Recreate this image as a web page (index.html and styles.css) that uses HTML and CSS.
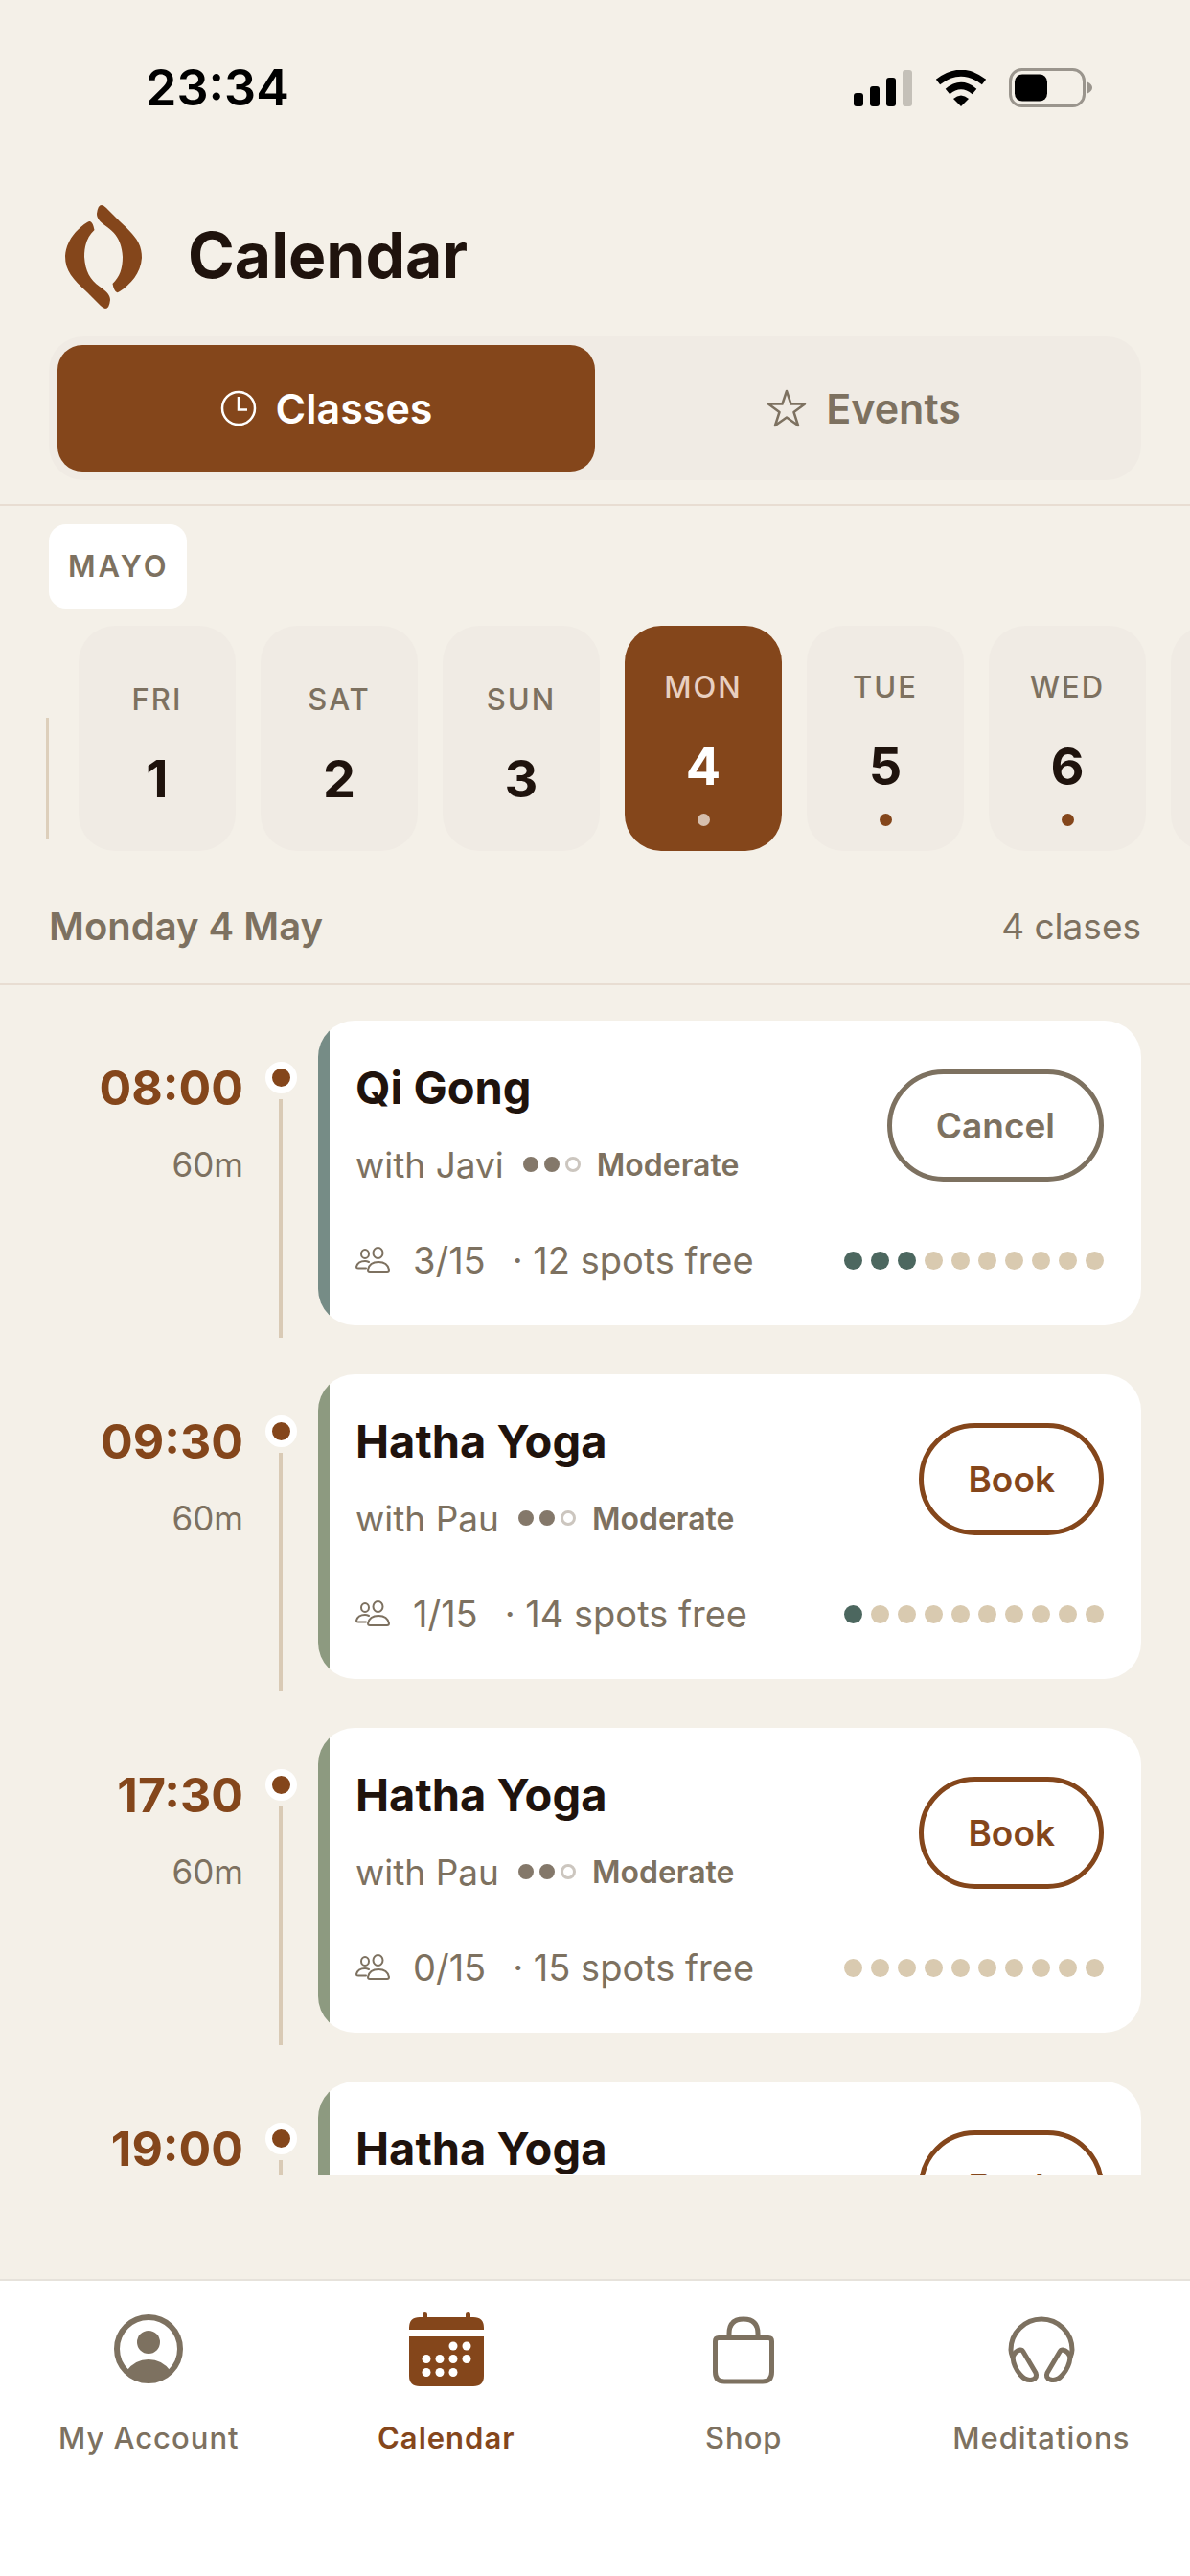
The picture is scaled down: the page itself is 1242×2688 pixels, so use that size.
FILE: index.html
```html
<!DOCTYPE html>
<html lang="en">

<head>
  <meta charset="UTF-8">
  <meta name="viewport" content="width=device-width, initial-scale=1.0">
  <title>Calendar</title>
  <link rel="stylesheet" href="styles.css">
</head>

<body>
  <!-- shared icon -->
  <svg class="defs" width="0" height="0" aria-hidden="true">
    <symbol id="people" viewBox="0 0 36 28">
      <g fill="none" stroke="currentColor" stroke-width="2" stroke-linejoin="round" stroke-linecap="round">
        <ellipse cx="10" cy="7.500" rx="4" ry="4.500" />
        <ellipse cx="23.500" cy="6.500" rx="5" ry="5.500" />
        <path d="M15 26Q13 26 13 24C14 19 18 16 24 16S34 19 35 24Q35 26 33 26Z" />
        <path d="M11 22.500H3Q1 22.500 1 21C2 17 6 15 10 15Q12 15 14 16" />
      </g>
    </symbol>
  </svg>

  <div class="app">
    <div class="statusbar">
      <span class="clock">23:34</span>
      <div class="status-icons">
        <svg width="62" height="38" viewBox="0 0 62 38">
          <rect x="0" y="24" width="10" height="14" rx="3" />
          <rect x="17" y="17" width="10" height="21" rx="3" />
          <rect x="34" y="8" width="10" height="30" rx="3" />
          <rect x="51" y="0" width="10" height="38" rx="3" fill="#c4c0b8" />
        </svg>
        <svg width="54" height="38" viewBox="0 0 54 38">
          <path d="M27 38L19 30Q27 23 35 30Z" />
          <path d="M13 22.500Q27 10.500 41 22.500" fill="none" stroke="#000" stroke-width="7" />
          <path d="M3 12.500Q27 -6 51 12.500" fill="none" stroke="#000" stroke-width="7" />
        </svg>
        <svg width="88" height="42" viewBox="0 0 88 42">
          <rect x="1.500" y="1.500" width="77" height="38" rx="12" fill="none" stroke="#9a958d" stroke-width="3" />
          <rect x="6" y="6.500" width="34" height="28" rx="8" />
          <path d="M82 14.500Q87 17 87 20.500T82 26.500Z" fill="#9a958d" />
        </svg>
      </div>
    </div>

    <header class="header">
      <div class="brand">
        <svg width="82" height="108" viewBox="0 0 82 108" fill="#84461b">
          <path id="leaf" d="M27 17Q30 18 31.500 26C24 33 21 42 21 54C22 69 27 78 37 85C46 91 48 95 48 99Q47 108 43 108Q41 108 38 105L24 91C9 77 1 69 1 53C2 37 13 25 24 18Q26 16.500 27 17Z" />
          <use href="#leaf" transform="rotate(180 41 54)" />
        </svg>
        <h1 class="title">Calendar</h1>
      </div>
      <div class="segment">
        <button class="segment-btn active" type="button">
          <svg width="38" height="38" viewBox="0 0 38 38" fill="none" stroke="currentColor" stroke-width="2.500">
            <circle cx="19" cy="19" r="17" />
            <path d="M19 7V20.500H28" />
          </svg>
          Classes
        </button>
        <button class="segment-btn" type="button">
          <svg width="42" height="40" viewBox="0 0 42 40" fill="none" stroke="currentColor" stroke-width="2.500" stroke-linejoin="round">
            <path d="M21 2L25.500 15.500H40L28.500 24L33 38L21 29.500L9 38L13.500 24L2 15.500H16.500Z" />
          </svg>
          Events
        </button>
      </div>
    </header>

    <section class="days">
      <span class="month">MAYO</span>
      <div class="strip">
        <span class="month-line"></span>
        <button class="day" type="button"><span class="day-name">FRI</span><span class="day-num">1</span></button>
        <button class="day" type="button"><span class="day-name">SAT</span><span class="day-num">2</span></button>
        <button class="day" type="button"><span class="day-name">SUN</span><span class="day-num">3</span></button>
        <button class="day selected" type="button"><span class="day-name">MON</span><span class="day-num">4</span><i class="day-dot"></i></button>
        <button class="day" type="button"><span class="day-name">TUE</span><span class="day-num">5</span><i class="day-dot"></i></button>
        <button class="day" type="button"><span class="day-name">WED</span><span class="day-num">6</span><i class="day-dot"></i></button>
        <button class="day" type="button" aria-label="Next day"></button>
      </div>
      <div class="summary">
        <h2 class="date">Monday 4 May</h2>
        <span class="count">4 clases</span>
      </div>
    </section>

    <main class="list">
      <article class="item">
        <div class="when">
          <time class="hour">08:00</time>
          <span class="length">60m</span>
        </div>
        <div class="rail"><i class="rail-dot"></i></div>
        <div class="card qigong">
          <div class="card-top">
            <div>
              <h3 class="name">Qi Gong</h3>
              <div class="meta">with Javi
                <span class="level"><i class="on"></i><i class="on"></i><i></i></span>
                <b class="level-name">Moderate</b>
              </div>
            </div>
            <button class="btn cancel" type="button">Cancel</button>
          </div>
          <div class="card-bottom">
            <svg class="people" width="36" height="28"><use href="#people" /></svg>
            <span>3/15</span>
            <span class="free">· 12 spots free</span>
            <div class="spots"><i class="taken"></i><i class="taken"></i><i class="taken"></i><i></i><i></i><i></i><i></i><i></i><i></i><i></i></div>
          </div>
        </div>
      </article>

      <article class="item">
        <div class="when">
          <time class="hour">09:30</time>
          <span class="length">60m</span>
        </div>
        <div class="rail"><i class="rail-dot"></i></div>
        <div class="card">
          <div class="card-top">
            <div>
              <h3 class="name">Hatha Yoga</h3>
              <div class="meta">with Pau
                <span class="level"><i class="on"></i><i class="on"></i><i></i></span>
                <b class="level-name">Moderate</b>
              </div>
            </div>
            <button class="btn" type="button">Book</button>
          </div>
          <div class="card-bottom">
            <svg class="people" width="36" height="28"><use href="#people" /></svg>
            <span>1/15</span>
            <span class="free">· 14 spots free</span>
            <div class="spots"><i class="taken"></i><i></i><i></i><i></i><i></i><i></i><i></i><i></i><i></i><i></i></div>
          </div>
        </div>
      </article>

      <article class="item">
        <div class="when">
          <time class="hour">17:30</time>
          <span class="length">60m</span>
        </div>
        <div class="rail"><i class="rail-dot"></i></div>
        <div class="card">
          <div class="card-top">
            <div>
              <h3 class="name">Hatha Yoga</h3>
              <div class="meta">with Pau
                <span class="level"><i class="on"></i><i class="on"></i><i></i></span>
                <b class="level-name">Moderate</b>
              </div>
            </div>
            <button class="btn" type="button">Book</button>
          </div>
          <div class="card-bottom">
            <svg class="people" width="36" height="28"><use href="#people" /></svg>
            <span>0/15</span>
            <span class="free">· 15 spots free</span>
            <div class="spots"><i></i><i></i><i></i><i></i><i></i><i></i><i></i><i></i><i></i><i></i></div>
          </div>
        </div>
      </article>

      <article class="item">
        <div class="when">
          <time class="hour">19:00</time>
        </div>
        <div class="rail"><i class="rail-dot"></i></div>
        <div class="card">
          <div class="card-top">
            <div>
              <h3 class="name">Hatha Yoga</h3>
              <div class="meta"></div>
            </div>
            <button class="btn" type="button">Book</button>
          </div>
        </div>
      </article>
    </main>

    <nav class="tabbar">
      <a class="tab" href="#account">
        <svg width="80" height="80" viewBox="0 0 80 80">
          <circle cx="40" cy="40" r="33" fill="none" stroke="currentColor" stroke-width="6" />
          <circle cx="40" cy="33" r="12" fill="currentColor" />
          <path d="M17 63Q26 51 40 51T63 63Q54 74 40 74T17 63Z" fill="currentColor" />
        </svg>
        My Account
      </a>
      <a class="tab current" href="#calendar">
        <svg width="80" height="80" viewBox="0 0 80 80" fill="currentColor">
          <path d="M1 20V18Q1 7 12 7H15V4Q15 2 17.500 2T20 4V7H60V4Q60 2 62.500 2T65 4V7H68Q79 7 79 18V20Z" />
          <path d="M1 27H79V68Q79 79 68 79H12Q1 79 1 68Z" />
          <g fill="#fff">
            <circle cx="47" cy="37" r="4.500" /><circle cx="61" cy="37" r="4.500" />
            <circle cx="19" cy="50.500" r="4.500" /><circle cx="33" cy="50.500" r="4.500" /><circle cx="47" cy="50.500" r="4.500" /><circle cx="61" cy="50.500" r="4.500" />
            <circle cx="19" cy="64.500" r="4.500" /><circle cx="33" cy="64.500" r="4.500" /><circle cx="47" cy="64.500" r="4.500" />
          </g>
        </svg>
        Calendar
      </a>
      <a class="tab" href="#shop">
        <svg width="80" height="80" viewBox="0 0 80 80" fill="none" stroke="currentColor" stroke-width="5">
          <path d="M25 28V24Q25 9 40 9T55 24V28" />
          <path d="M14 28.500H66Q69.500 28.500 69.500 32V64Q69.500 74 60 74H20Q10.500 74 10.500 64V32Q10.500 28.500 14 28.500Z" />
        </svg>
        Shop
      </a>
      <a class="tab" href="#meditations">
        <svg width="80" height="80" viewBox="0 0 80 80" fill="none" stroke="currentColor" stroke-width="5" stroke-linejoin="round">
          <path d="M10 49Q8 44 8 41A32 32 0 0 1 72 41Q72 44 70 49" />
          <path d="M10 49Q12 42 18 41Q20 41 21 43L34 65Q36 70 31 72Q24 74 18 67Q11 59 10 49Z" />
          <path d="M70 49Q68 42 62 41Q60 41 59 43L46 65Q44 70 49 72Q56 74 62 67Q69 59 70 49Z" />
        </svg>
        Meditations
      </a>
    </nav>
  </div>
</body>

</html>
```
FILE: styles.css
```css
* {
  box-sizing: border-box;
}
body {
  margin: 0;
  font-family: Inter, "Liberation Sans", sans-serif;
  color: #1f130d;
  background: #f4f0e8;
}
button {
  font-family: inherit;
  border: 0;
  padding: 0;
  cursor: pointer;
}
h1, h2, h3 {
  margin: 0;
}
svg {
  flex: none;
}
.defs {
  position: absolute;
}
.app {
  display: flex;
  flex-direction: column;
  height: 100vh;
  overflow: hidden;
}

/* status bar */
.statusbar {
  display: flex;
  align-items: center;
  justify-content: space-between;
  padding: 64px 101px 0 152px;
  line-height: 56px;
}
.clock {
  font-size: 52px;
  font-weight: 600;
  color: #000;
}
.status-icons {
  display: flex;
  align-items: center;
  gap: 23px;
}

/* header */
.header {
  padding: 92px 51px 25px;
  border-bottom: 2px solid #e8ddd2;
}
.brand {
  display: flex;
  align-items: center;
  gap: 47px;
  padding-left: 16px;
  height: 112px;
}
.title {
  padding-bottom: 5px;
  font-size: 66px;
  font-weight: 700;
}
.segment {
  display: flex;
  margin-top: 27px;
  padding: 9px;
  border-radius: 36px;
  background: #f0ebe4;
}
.segment-btn {
  flex: 1;
  display: flex;
  align-items: center;
  justify-content: center;
  gap: 20px;
  height: 132px;
  border-radius: 26px;
  font-size: 43px;
  font-weight: 600;
  color: #7d7160;
  background: none;
}
.segment-btn.active {
  color: #fff;
  background: #84461b;
}

/* day picker */
.days {
  padding-top: 19px;
  border-bottom: 2px solid #e8ddd2;
}
.month {
  display: inline-block;
  margin-left: 51px;
  padding: 0 19px 0 20px;
  border-radius: 18px;
  font-size: 31px;
  font-weight: 600;
  line-height: 88px;
  letter-spacing: 3px;
  vertical-align: top;
  color: #7d7160;
  background: #fff;
}
.strip {
  display: flex;
  align-items: flex-end;
  gap: 26px;
  margin-top: 18px;
  padding-left: 48px;
  overflow: hidden;
}
.month-line {
  flex: none;
  width: 3px;
  height: 126px;
  margin: 0 5px 13px 0;
  background: #ddcfbb;
}
.day {
  flex: none;
  display: flex;
  flex-direction: column;
  align-items: center;
  justify-content: center;
  width: 164px;
  height: 235px;
  padding-top: 18px;
  border-radius: 38px;
  color: #1f130d;
  background: #f0ebe4;
}
.day-name {
  font-size: 31px;
  font-weight: 500;
  line-height: 40px;
  letter-spacing: 2px;
  color: #7d7160;
}
.day-num {
  margin-top: 27px;
  font-size: 54px;
  font-weight: 700;
  line-height: 72px;
}
.day-dot {
  width: 13px;
  height: 13px;
  margin-top: 13px;
  border-radius: 50%;
  background: #84461b;
}
.day.selected {
  color: #fff;
  background: #84461b;
}
.selected .day-name {
  color: #e8cfc0;
}
.selected .day-dot {
  background: #d6bfae;
}
.summary {
  display: flex;
  align-items: center;
  justify-content: space-between;
  padding: 49px 51px 29px;
  line-height: 60px;
  color: #7d7160;
}
.date {
  font-size: 40px;
  font-weight: 600;
}
.count {
  font-size: 37px;
}

/* class list */
.list {
  flex: 1;
  min-height: 0;
  margin-bottom: 108px;
  padding: 37px 51px 0;
  overflow: hidden;
}
.item {
  display: grid;
  grid-template-columns: 203px 78px 1fr;
  margin-bottom: 38px;
}
.when {
  padding-top: 40px;
  text-align: right;
}
.hour {
  display: block;
  font-size: 50px;
  font-weight: 700;
  line-height: 60px;
  color: #84461b;
}
.length {
  display: block;
  margin-top: 22px;
  font-size: 35px;
  line-height: 56px;
  color: #7d7160;
}
.rail {
  display: flex;
  flex-direction: column;
  align-items: center;
  padding-top: 43px;
}
.rail-dot {
  width: 33px;
  height: 33px;
  border: 7px solid #fff;
  border-radius: 50%;
  background: #84461b;
}
.rail::after {
  content: "";
  flex: 1;
  width: 4px;
  margin-top: 6px;
  background: #d9cab5;
}
.card {
  margin-bottom: 13px;
  padding: 40px 39px;
  border-radius: 38px;
  background: linear-gradient(to right, #8d9a80 12px, #fff 12px);
}
.card.qigong {
  background: linear-gradient(to right, #768c86 12px, #fff 12px);
}
.card-top {
  display: flex;
  align-items: center;
  justify-content: space-between;
}
.name {
  font-size: 47px;
  font-weight: 700;
  line-height: 60px;
}
.meta {
  display: flex;
  align-items: center;
  height: 56px;
  margin-top: 22px;
  font-size: 37px;
  color: #7d7160;
}
.level {
  display: flex;
  gap: 6px;
  margin: 0 17px 0 20px;
}
.level i {
  width: 16px;
  height: 16px;
  border: 3px solid #ccc6bf;
  border-radius: 50%;
}
.level .on {
  border-color: #84786a;
  background: #84786a;
}
.level-name {
  font-size: 32px;
  font-weight: 600;
}
.btn {
  height: 117px;
  padding: 0 46px;
  border: 5px solid #84461b;
  border-radius: 59px;
  font-size: 37px;
  font-weight: 600;
  color: #84461b;
  background: #fff;
}
.btn.cancel {
  border-color: #7d7160;
  color: #7d7160;
}
.card-bottom {
  display: flex;
  align-items: center;
  height: 56px;
  margin-top: 44px;
  font-size: 38px;
  color: #7d7160;
}
.people {
  margin-right: 24px;
}
.free {
  margin-left: 28px;
}
.spots {
  display: flex;
  gap: 9px;
  margin-left: auto;
}
.spots i {
  width: 19px;
  height: 19px;
  border-radius: 50%;
  background: #d9cab0;
}
.spots .taken {
  background: #4c675f;
}

/* tab bar */
.tabbar {
  display: flex;
  padding: 31px 0 124px;
  border-top: 2px solid #e6e2db;
  background: #fff;
}
.tab {
  flex: 1;
  display: flex;
  flex-direction: column;
  align-items: center;
  gap: 33px;
  font-size: 31px;
  font-weight: 500;
  line-height: 40px;
  letter-spacing: 1px;
  text-decoration: none;
  color: #7d7160;
}
.tab.current {
  font-weight: 600;
  color: #84461b;
}
```
